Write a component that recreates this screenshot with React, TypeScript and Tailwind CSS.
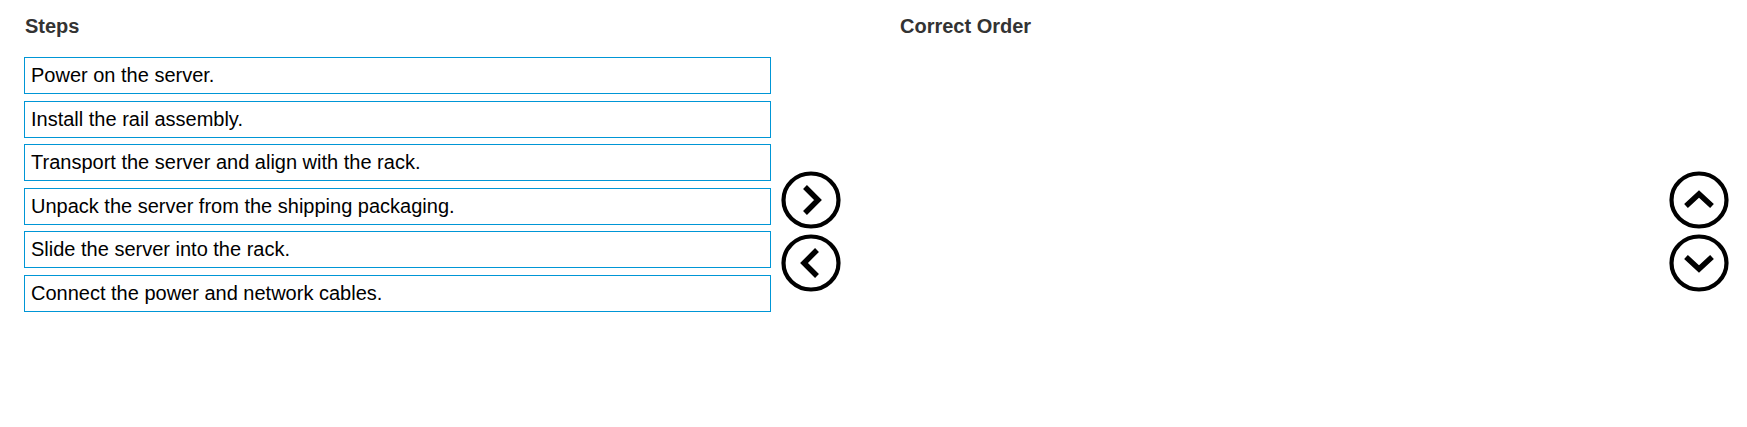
import React from "react";

const steps = [
  "Power on the server.",
  "Install the rail assembly.",
  "Transport the server and align with the rack.",
  "Unpack the server from the shipping packaging.",
  "Slide the server into the rack.",
  "Connect the power and network cables.",
];

type Dir = "right" | "left" | "up" | "down";

// chevron point lists, drawn inside a 60x58 box
const chevrons: Record<Dir, string> = {
  right: "24,16 37,29 24,42",
  left: "36,16 23,29 36,42",
  up: "17,35 30,23 43,35",
  down: "17,23 30,35 43,23",
};

const CircleButton: React.FC<{ dir: Dir; label: string }> = ({ dir, label }) => (
  <button type="button" aria-label={label} className="block w-[60px] h-[58px] p-0 bg-transparent">
    <svg width="60" height="58" viewBox="0 0 60 58">
      <ellipse cx="30" cy="29" rx="27.5" ry="26.5" fill="white" stroke="black" strokeWidth="4.2" />
      <polyline
        points={chevrons[dir]}
        fill="none"
        stroke="black"
        strokeWidth="5.5"
        strokeLinejoin="miter"
        strokeLinecap="butt"
      />
    </svg>
  </button>
);

export default function App() {
  return (
    <div className="w-[1747px] h-[427px] bg-white font-['Liberation_Sans',Arial,sans-serif]">
      <div className="flex pl-[24px] pt-[14px]">
        {/* Steps */}
        <div className="w-[747px] shrink-0">
          <h2 className="text-[20px] leading-[24px] font-bold text-[#333333] pl-[1px]">Steps</h2>
          <div className="mt-[19px] flex flex-col gap-[6.6px]">
            {steps.map((s) => (
              <div
                key={s}
                className="h-[37px] border border-[#0096d6] px-[6px] text-[20px] leading-[35px] text-black whitespace-nowrap"
              >
                {s}
              </div>
            ))}
          </div>
        </div>

        {/* Move buttons */}
        <div className="ml-[10px] pt-[157px] flex flex-col gap-[5px] shrink-0">
          <CircleButton dir="right" label="Move right" />
          <CircleButton dir="left" label="Move left" />
        </div>

        {/* Correct order */}
        <div className="ml-[59px] flex-1">
          <h2 className="text-[20px] leading-[24px] font-bold text-[#333333]">Correct Order</h2>
        </div>

        {/* Reorder buttons */}
        <div className="mr-[18px] pt-[157px] flex flex-col gap-[5px] shrink-0">
          <CircleButton dir="up" label="Move up" />
          <CircleButton dir="down" label="Move down" />
        </div>
      </div>
    </div>
  );
}
